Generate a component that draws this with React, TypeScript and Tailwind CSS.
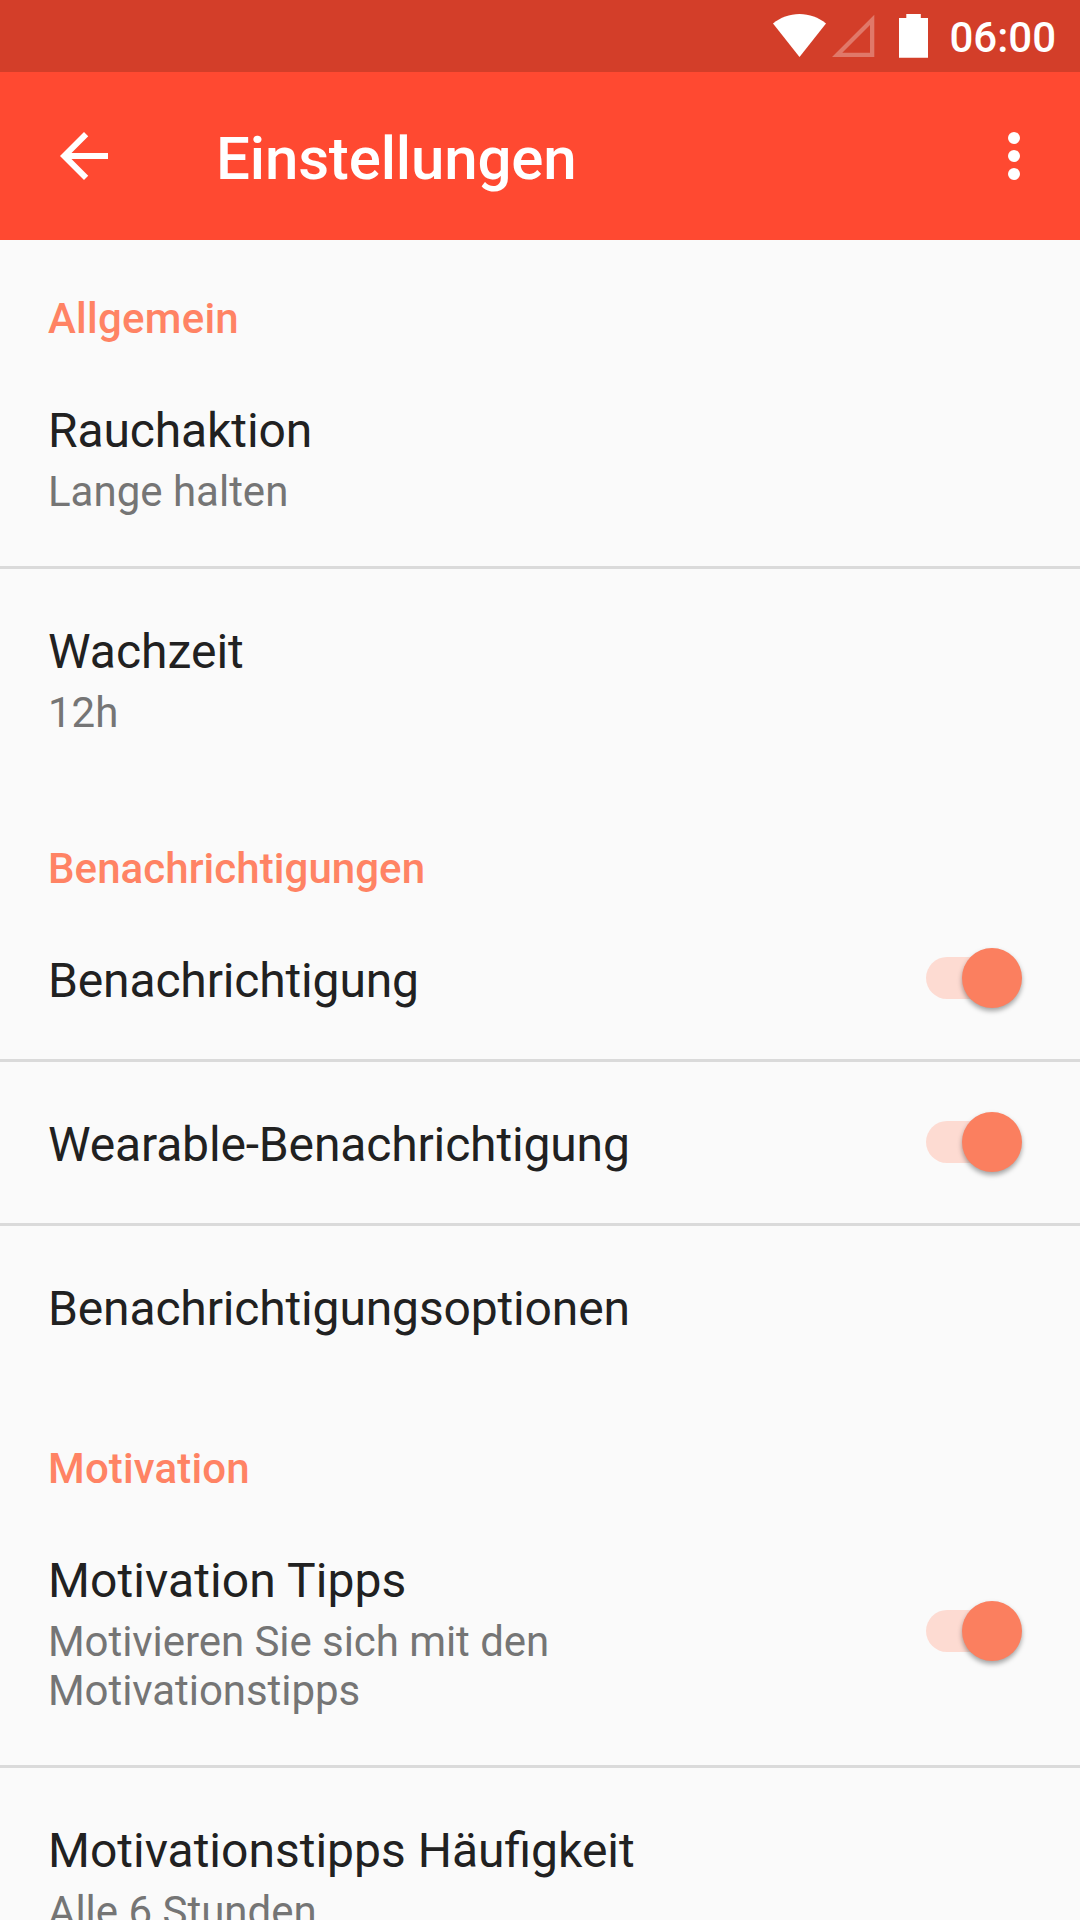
import React from "react";
import clsx from "clsx";

interface Preference {
  title: string;
  summary?: string;
  enabled?: boolean;
  titleClass?: string;
  summaryClass?: string;
}

interface PreferenceCategory {
  name: string;
  nameClass?: string;
  items: Preference[];
}

const categories: PreferenceCategory[] = [
  {
    name: "Allgemein",
    nameClass: "tracking-[0.25px]",
    items: [
      {
        title: "Rauchaktion",
        titleClass: "tracking-[-0.12px]",
        summary: "Lange halten",
      },
      { title: "Wachzeit", summary: "12h" },
    ],
  },
  {
    name: "Benachrichtigungen",
    nameClass: "tracking-[0.06px]",
    items: [
      {
        title: "Benachrichtigung",
        titleClass: "tracking-[-0.15px]",
        enabled: true,
      },
      {
        title: "Wearable-Benachrichtigung",
        titleClass: "tracking-[-0.15px]",
        enabled: true,
      },
      { title: "Benachrichtigungsoptionen", titleClass: "tracking-[-0.15px]" },
    ],
  },
  {
    name: "Motivation",
    nameClass: "tracking-[0.15px]",
    items: [
      {
        title: "Motivation Tipps",
        titleClass: "tracking-[0.1px]",
        summary: "Motivieren Sie sich mit den Motivationstipps",
        summaryClass: "tracking-[-0.06px]",
        enabled: true,
      },
      { title: "Motivationstipps Häufigkeit", summary: "Alle 6 Stunden" },
    ],
  },
];

const StatusBar = () => (
  <div className="flex h-[72px] shrink-0 items-start justify-end bg-[#d33e29] pr-[24px] text-white">
    <svg className="mt-[14px] h-[44px] w-[54px]" viewBox="0 0 54 44" fill="currentColor">
      <path d="M0 9.5C7.5 3.5 16.5 0 26.5 0s19 3.500 26.500 9.500L26.500 43z" />
    </svg>
    <svg className="ml-[5px] mt-[14px] h-[44px] w-[43px]" viewBox="0 0 43 44" fill="currentColor">
      <path
        fillRule="evenodd"
        fillOpacity="0.3"
        d="M42.300 0.700V43H0zM38 11V38.700H10.300z"
      />
    </svg>
    <svg className="ml-[24px] mt-[14px] h-[44px] w-[29px]" viewBox="0 0 29 44" fill="currentColor">
      <path d="M7.300 0h14.500v4H29v39.700H0V4h7.300z" />
    </svg>
    <span className="ml-[21px] mt-[13px] text-[42px] font-medium leading-[49px]">06:00</span>
  </div>
);

const Toolbar = () => (
  <header className="flex h-[168px] shrink-0 items-start bg-[#ff4931] pl-[48px] pr-[30px] pt-[48px] text-white">
    <button aria-label="Zurück">
      <svg className="size-[72px]" viewBox="0 0 24 24" fill="currentColor">
        <path d="M20 11H7.830l5.590-5.590L12 4l-8 8 8 8 1.410-1.410L7.830 13H20v-2z" />
      </svg>
    </button>
    <h1 className="ml-[96px] mt-[4px] flex-1 text-[60px] font-medium leading-[70px] tracking-[-0.15px]">
      Einstellungen
    </h1>
    <button aria-label="Mehr">
      <svg className="size-[72px]" viewBox="0 0 24 24" fill="currentColor">
        <circle cx="12" cy="6" r="2" />
        <circle cx="12" cy="12" r="2" />
        <circle cx="12" cy="18" r="2" />
      </svg>
    </button>
  </header>
);

const Toggle = () => (
  <div
    role="switch"
    aria-checked="true"
    className="mb-px mr-[58px] flex h-[60px] w-[96px] shrink-0 items-center"
  >
    <div className="flex h-[42px] w-[84px] items-center rounded-full bg-[#fddbd2]">
      <div className="ml-[35.5px] size-[60px] shrink-0 rounded-full bg-[#fb7f5f] shadow-[0_3px_5px_rgba(0,0,0,0.35)]" />
    </div>
  </div>
);

const PreferenceRow = ({ item, last }: { item: Preference; last: boolean }) => (
  <div
    className={clsx(
      "flex items-center border-b-[3px]",
      last ? "border-transparent" : "border-[#dadada]"
    )}
  >
    <div className="flex-1 pb-[50px] pl-[48px] pt-[55px]">
      <p className={clsx("text-[48px] leading-[56px] text-[#212121]", item.titleClass)}>
        {item.title}
      </p>
      {item.summary && (
        <p
          className={clsx(
            "mt-[8px] max-w-[620px] text-[42px] leading-[49px] text-[#757575]",
            item.summaryClass
          )}
        >
          {item.summary}
        </p>
      )}
    </div>
    {item.enabled && <Toggle />}
  </div>
);

export default function App() {
  return (
    <div className="flex h-[1920px] w-[1080px] flex-col overflow-hidden bg-[#fafafa] font-[Roboto,sans-serif]">
      <StatusBar />
      <Toolbar />
      <main className="min-h-0 flex-1 overflow-hidden">
        {categories.map((category) => (
          <section key={category.name}>
            <h2
              className={clsx(
                "pb-[5px] pl-[48px] pt-[54px] text-[42px] font-medium leading-[49px] text-[#ff8364]",
                category.nameClass
              )}
            >
              {category.name}
            </h2>
            {category.items.map((item, i) => (
              <PreferenceRow
                key={item.title}
                item={item}
                last={i === category.items.length - 1}
              />
            ))}
          </section>
        ))}
      </main>
    </div>
  );
}
